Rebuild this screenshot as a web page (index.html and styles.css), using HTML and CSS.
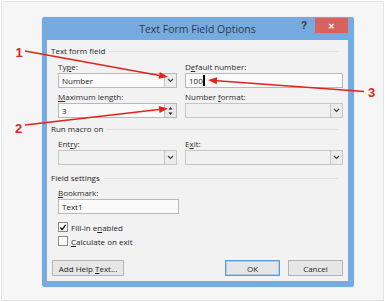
FILE: index.html
```html
<!DOCTYPE html>
<html>
<head>
<meta charset="utf-8">
<link rel="stylesheet" href="styles.css">
</head>
<body>
<div class="frame">
  <div class="dialog">
    <div class="titlebar">
      <div></div>
      <div class="title">Text Form Field Options</div>
      <div class="tools">
        <span class="help">?</span>
        <span class="close">✕</span>
      </div>
    </div>
    <div class="content">
      <div class="group">Text form field</div>
      <div class="fields first">
        <div class="field">
          <div class="label">Ty<u>p</u>e:</div>
          <div class="box enabled"><span class="val">Number</span><span class="drop"><svg width="7" height="5" viewBox="0 0 7 5"><polyline points="1,1 3.5,3.5 6,1" fill="none" stroke="#444" stroke-width="1.2"/></svg></span></div>
        </div>
        <div class="field">
          <div class="label">D<u>e</u>fault number:</div>
          <div class="box enabled"><span class="val">100<span class="caret"></span></span></div>
        </div>
        <div class="field">
          <div class="label"><u>M</u>aximum length:</div>
          <div class="box enabled"><span class="val">3</span><span class="spin"><svg width="7" height="12" viewBox="0 0 7 12"><polygon points="3.5,2 1.5,4.5 5.5,4.5" fill="#222"/><polygon points="3.5,10 1.5,7.5 5.5,7.5" fill="#222"/></svg></span></div>
        </div>
        <div class="field">
          <div class="label">Number <u>f</u>ormat:</div>
          <div class="box"><span class="val"></span><span class="drop"><svg width="7" height="5" viewBox="0 0 7 5"><polyline points="1,1 3.5,3.5 6,1" fill="none" stroke="#444" stroke-width="1.2"/></svg></span></div>
        </div>
      </div>
      <div class="group g2">Run macro on</div>
      <div class="fields">
        <div class="field">
          <div class="label">Ent<u>r</u>y:</div>
          <div class="box"><span class="val"></span><span class="drop"><svg width="7" height="5" viewBox="0 0 7 5"><polyline points="1,1 3.5,3.5 6,1" fill="none" stroke="#444" stroke-width="1.2"/></svg></span></div>
        </div>
        <div class="field">
          <div class="label">E<u>x</u>it:</div>
          <div class="box"><span class="val"></span><span class="drop"><svg width="7" height="5" viewBox="0 0 7 5"><polyline points="1,1 3.5,3.5 6,1" fill="none" stroke="#444" stroke-width="1.2"/></svg></span></div>
        </div>
      </div>
      <div class="group g3">Field settings</div>
      <div class="bookmark">
        <div class="label"><u>B</u>ookmark:</div>
        <div class="box enabled"><span class="val">Text1</span></div>
      </div>
      <div class="checks">
        <div class="check"><span class="cb"><svg width="9" height="9" viewBox="0 0 9 9"><polyline points="1.5,4.5 3.5,7 7.5,1.5" fill="none" stroke="#111" stroke-width="1.5"/></svg></span><span>Fill-in e<u>n</u>abled</span></div>
        <div class="check"><span class="cb"></span><span><u>C</u>alculate on exit</span></div>
      </div>
      <div class="buttons">
        <span class="btn help-btn"><span>Add Help <u>T</u>ext...</span></span>
        <span class="spacer"></span>
        <span class="btn ok">OK</span>
        <span class="btn">Cancel</span>
      </div>
    </div>
  </div>
</div>
<svg class="annot" width="385" height="302" viewBox="0 0 385 302">
  <g stroke="#e3221b" stroke-width="1.5" fill="none">
    <line x1="25" y1="51" x2="159.5" y2="75.4"/>
    <line x1="25" y1="125" x2="159" y2="109.5"/>
    <line x1="364" y1="91.5" x2="217" y2="80.7"/>
  </g>
  <g fill="#e3221b">
    <polygon points="168,77 158.5,78.8 159.8,72"/>
    <polygon points="168,108.5 159.5,113 158.7,106"/>
    <polygon points="208,80 217.2,77.2 216.7,84.2"/>
  </g>
  <g fill="#e3221b" font-family="Liberation Sans, Arial, sans-serif" font-weight="bold" font-size="13">
    <text x="15.5" y="56.5">1</text>
    <text x="15" y="133">2</text>
    <text x="368" y="97">3</text>
  </g>
</svg>
</body>
</html>
```
FILE: styles.css
```css
html, body {
  margin: 0;
  padding: 0;
}
body {
  width: 385px;
  height: 302px;
  background: #ffffff;
  position: relative;
  overflow: hidden;
  font-family: "Open Sans", "Noto Sans", sans-serif;
  color: #222;
}
.frame {
  box-sizing: border-box;
  width: 383px;
  height: 300px;
  margin: 1px;
  border: 1px solid #e4e4e4;
  background: #f6f6f6;
  padding: 15px 0 0 40px;
}
.dialog {
  box-sizing: border-box;
  width: 312px;
  height: 270px;
  background: #76abe0;
  border-radius: 3px;
  padding: 0 6px 6px 5px;
  display: flex;
  flex-direction: column;
  box-shadow: 0 0 1px #8fb6df;
}
.titlebar {
  height: 23px;
  display: grid;
  grid-template-columns: 1fr auto 1fr;
  align-items: center;
}
.title {
  font-size: 10.5px;
  color: #2f3a45;
  padding-top: 1px;
}
.tools {
  display: flex;
  justify-content: flex-end;
  align-items: flex-start;
  align-self: start;
}
.help {
  font-family: "Liberation Sans", Arial, sans-serif;
  font-weight: bold;
  font-size: 10px;
  color: #2d3540;
  margin-top: 3px;
  margin-right: 8px;
}
.close {
  width: 33px;
  height: 15px;
  margin-top: 1px;
  background: #d9625f;
  color: #fff;
  font-size: 8px;
  font-weight: bold;
  display: flex;
  align-items: center;
  justify-content: center;
}
.content {
  flex: 1;
  background: #f2f2f2;
  padding: 5px 5px 5px 4px;
  display: flex;
  flex-direction: column;
}
.group {
  font-size: 8px;
  line-height: 12px;
  height: 12px;
  color: #1e1e1e;
  display: flex;
  align-items: center;
  gap: 4px;
}
.group::after {
  content: "";
  flex: 1;
  height: 1px;
  background: #e1e1e1;
  margin-right: 5px;
}
.g2 { margin-top: 5px; }
.g3 { margin-top: 7px; }
.fields {
  display: grid;
  grid-template-columns: 119px 158px;
  column-gap: 8px;
  row-gap: 2px;
  margin-left: 7px;
  margin-top: 2px;
}
.fields.first { margin-top: 3px; }
.label {
  font-size: 8px;
  line-height: 13px;
  height: 13px;
  color: #2a2a2a;
  white-space: nowrap;
}
.box {
  box-sizing: border-box;
  height: 15px;
  border: 1px solid #c6c6c6;
  background: #f1f1f1;
  display: flex;
  align-items: stretch;
  font-size: 8px;
}
.box.enabled {
  background: #fafafa;
  border-color: #b9b9b9;
}
.val {
  flex: 1;
  padding-left: 3px;
  display: flex;
  align-items: center;
  color: #1e1e1e;
}
.caret {
  display: inline-block;
  width: 2px;
  height: 11px;
  background: #000;
  margin-left: 0.5px;
}
.drop {
  box-sizing: border-box;
  width: 12px;
  border-left: 1px solid #c4c4c4;
  background: #ececec;
  display: flex;
  align-items: center;
  justify-content: center;
}
.spin {
  box-sizing: border-box;
  width: 12px;
  border-left: 1px solid #c4c4c4;
  background: #e8e8e8;
  display: flex;
  align-items: center;
  justify-content: center;
}
.bookmark {
  margin-left: 7px;
  margin-top: 2px;
  width: 121px;
}
.checks {
  margin-left: 7px;
  margin-top: 6px;
  display: flex;
  flex-direction: column;
}
.check {
  height: 14px;
  display: flex;
  align-items: center;
  gap: 3px;
  font-size: 8px;
  color: #1e1e1e;
}
.cb {
  box-sizing: border-box;
  width: 10px;
  height: 10px;
  border: 1px solid #8a8a8a;
  background: #fbfbfb;
  display: flex;
  align-items: center;
  justify-content: center;
}
.buttons {
  margin-top: auto;
  display: flex;
  align-items: center;
  gap: 8px;
  margin-left: 1px;
}
.spacer { flex: 1; }
.btn {
  box-sizing: border-box;
  height: 16px;
  width: 55px;
  border: 1px solid #b4b4b4;
  background: #e6e6e6;
  font-size: 8px;
  color: #1e1e1e;
  display: flex;
  align-items: center;
  justify-content: center;
  white-space: nowrap;
}
.help-btn { width: 72px; }
.ok {
  border-color: #5b9bd6;
  box-shadow: inset 0 0 0 1px #a9cdef;
}
.annot {
  position: absolute;
  left: 0;
  top: 0;
  pointer-events: none;
}
```
